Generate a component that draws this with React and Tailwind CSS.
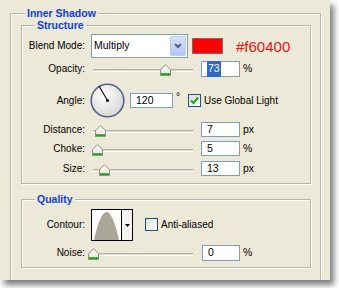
import React from 'react';

const GROUP = 'border border-[#b7b5a5] shadow-[1px_1px_0_#fff,inset_1px_1px_0_#fff]';

function Group({ title, className, legendClass, children }) {
  return (
    <div className={`${GROUP} ${className}`}>
      <div className={`-mt-[8px] w-fit px-[2px] bg-[#ece9d8] font-bold text-[10.5px] leading-[14px] text-[#0b3fd8] ${legendClass}`}>
        {title}
      </div>
      {children}
    </div>
  );
}

function Label({ children }) {
  return <div className="w-[63px] shrink-0 text-right leading-none">{children}</div>;
}

function Thumb() {
  return (
    <svg width="11" height="12" viewBox="0 0 11 12">
      <defs>
        <linearGradient id="tg" x1="0" y1="0" x2="0" y2="1">
          <stop offset="0" stopColor="#ffffff" />
          <stop offset="1" stopColor="#e2e2da" />
        </linearGradient>
      </defs>
      <path d="M0.5 5.5 L5.5 0.5 L10.5 5.5 L10.5 11.5 L0.5 11.5 Z" fill="url(#tg)" stroke="#8f8e80" />
      <rect x="1" y="9" width="9" height="2" fill="#21a121" />
    </svg>
  );
}

function Slider({ at }) {
  return (
    <div className="relative w-[100px] h-full ml-[8px] shrink-0">
      <div className="absolute left-0 right-0 top-1/2 h-[3px] bg-[#dcdacd] border-t border-[#b3b1a3] border-b border-b-white" />
      <div className="absolute top-1/2 -translate-y-[40%]" style={{ left: at - 5.5 }}>
        <Thumb />
      </div>
    </div>
  );
}

function Field({ children, className }) {
  return (
    <div className={`h-full shrink-0 bg-white border border-[#7f9db9] flex items-center pl-[5px] text-[10.5px] ${className}`}>
      {children}
    </div>
  );
}

function Check({ checked }) {
  return (
    <div className="w-[13px] h-[13px] shrink-0 border border-[#1c5180] bg-gradient-to-br from-[#dcdcd5] to-white flex items-center justify-center">
      {checked && (
        <svg width="9" height="9" viewBox="0 0 9 9">
          <path d="M1 4.5 L3.5 7 L8 1.5" fill="none" stroke="#21a121" strokeWidth="2" />
        </svg>
      )}
    </div>
  );
}

function Dial() {
  return (
    <svg width="35" height="35" viewBox="0 0 35 35" className="ml-[5px] shrink-0">
      <defs>
        <radialGradient id="dg" cx="0.4" cy="0.35" r="0.7">
          <stop offset="0" stopColor="#ffffff" />
          <stop offset="1" stopColor="#d6d6d2" />
        </radialGradient>
      </defs>
      <circle cx="17.5" cy="17.5" r="16.3" fill="url(#dg)" stroke="#52618d" strokeWidth="1.6" />
      <line x1="17.5" y1="17.5" x2="9" y2="3" stroke="#111" strokeWidth="1.2" />
      <circle cx="17.5" cy="17.5" r="1.6" fill="#111" />
    </svg>
  );
}

function Row({ className, children }) {
  return <div className={`flex items-center ${className}`}>{children}</div>;
}

export default function App() {
  return (
    <div className="min-h-screen bg-white">
      <div className="w-[330px] h-[280px] bg-[#ece9d8] overflow-hidden pt-[13px] pl-[10px] shadow-[4px_5px_6px_rgba(0,0,0,0.5)] font-['Liberation_Sans',Arial,sans-serif] text-[10px] text-black">
        <Group title="Inner Shadow" className="w-[311px] h-[300px]" legendClass="ml-[14px]">
          <Group title="Structure" className="ml-[10px] mt-[5px] w-[290px] h-[159px]" legendClass="ml-[13px]">
            <Row className="mt-[2px] h-[24px]">
              <Label>Blend Mode:</Label>
              <div className="ml-[6px] w-[97px] h-full shrink-0 bg-white border border-[#7f9db9] flex items-center justify-between pl-[2px] pr-[1px] text-[10.5px]">
                <span>Multiply</span>
                <div className="w-[16px] h-[20px] rounded-[2px] border border-[#b9cbf3] bg-gradient-to-b from-[#d6e2fd] to-[#b2c6f5] flex items-center justify-center">
                  <svg width="8" height="6" viewBox="0 0 8 6">
                    <path d="M1 1 L4 4 L7 1" fill="none" stroke="#4d6185" strokeWidth="2" />
                  </svg>
                </div>
              </div>
              <div className="ml-[4px] w-[31px] h-[16px] shrink-0 bg-[#ff0000] border border-[#7a6a6a]" />
              <span className="ml-[13px] text-[15px] leading-none text-[#f21212]">#f60400</span>
            </Row>
            <Row className="mt-[3px] h-[16px]">
              <Label>Opacity:</Label>
              <Slider at={72} />
              <Field className="ml-[8px] w-[39px]">
                <span className="bg-[#316ac5] text-white px-[1px]">73</span>
              </Field>
              <span className="ml-[3px] text-[10.5px]">%</span>
            </Row>
            <Row className="mt-[6px] h-[35px]">
              <Label>Angle:</Label>
              <Dial />
              <div className="ml-[5px] h-[15px]">
                <Field className="w-[43px]">120</Field>
              </div>
              <span className="ml-[3px] w-[12px] -mt-[8px] text-[10px]">°</span>
              <Check checked />
              <span className="ml-[3px]">Use Global Light</span>
            </Row>
            <Row className="mt-[4px] h-[15px]">
              <Label>Distance:</Label>
              <Slider at={7} />
              <Field className="ml-[8px] w-[39px]">7</Field>
              <span className="ml-[3px] text-[10.5px]">px</span>
            </Row>
            <Row className="mt-[4px] h-[15px]">
              <Label>Choke:</Label>
              <Slider at={4} />
              <Field className="ml-[8px] w-[39px]">5</Field>
              <span className="ml-[3px] text-[10.5px]">%</span>
            </Row>
            <Row className="mt-[5px] h-[15px]">
              <Label>Size:</Label>
              <Slider at={11} />
              <Field className="ml-[8px] w-[39px]">13</Field>
              <span className="ml-[3px] text-[10.5px]">px</span>
            </Row>
          </Group>
          <Group title="Quality" className="ml-[10px] mt-[15px] w-[290px] h-[69px]" legendClass="ml-[13px]">
            <Row className="mt-[3px] h-[32px]">
              <Label>Contour:</Label>
              <div className="ml-[6px] w-[42px] h-full shrink-0 border border-black flex">
                <div className="w-[29px] h-full bg-white">
                  <svg width="29" height="30" viewBox="0 0 29 30">
                    <path d="M2 30 Q14.5 -26 27 30 Z" fill="#aaa698" />
                  </svg>
                </div>
                <div className="flex-1 border-l border-black bg-[#f4f3ee] flex items-center justify-center">
                  <svg width="5" height="3" viewBox="0 0 5 3">
                    <path d="M0 0 L5 0 L2.5 3 Z" fill="#000" />
                  </svg>
                </div>
              </div>
              <div className="ml-[12px] -mt-[2px] flex items-center">
                <Check />
                <span className="ml-[3px]">Anti-aliased</span>
              </div>
            </Row>
            <Row className="mt-[4px] h-[16px]">
              <Label>Noise:</Label>
              <Slider at={0} />
              <Field className="ml-[9px] w-[38px]">0</Field>
              <span className="ml-[3px] text-[10.5px]">%</span>
            </Row>
          </Group>
        </Group>
      </div>
    </div>
  );
}
